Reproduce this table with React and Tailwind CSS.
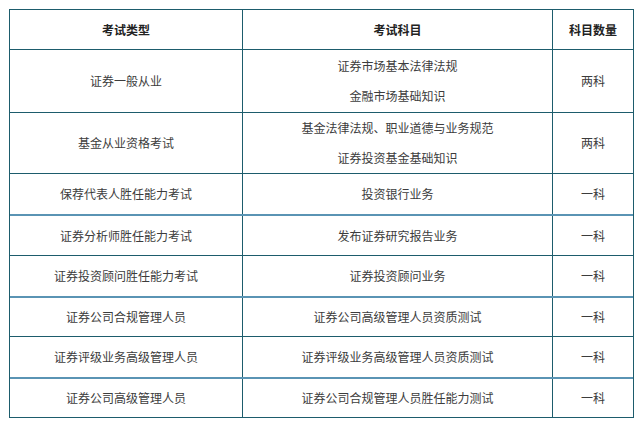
import React from "react";

const rows = [
  { type: "证券一般从业", subjects: ["证券市场基本法律法规", "金融市场基础知识"], count: "两科", h: "h-[63px]" },
  { type: "基金从业资格考试", subjects: ["基金法律法规、职业道德与业务规范", "证券投资基金基础知识"], count: "两科", h: "h-[61px]" },
  { type: "保荐代表人胜任能力考试", subjects: ["投资银行业务"], count: "一科", h: "h-[41px]" },
  { type: "证券分析师胜任能力考试", subjects: ["发布证券研究报告业务"], count: "一科", h: "h-[41px]", light: true },
  { type: "证券投资顾问胜任能力考试", subjects: ["证券投资顾问业务"], count: "一科", h: "h-[41px]" },
  { type: "证券公司合规管理人员", subjects: ["证券公司高级管理人员资质测试"], count: "一科", h: "h-[40px]", light: true },
  { type: "证券评级业务高级管理人员", subjects: ["证券评级业务高级管理人员资质测试"], count: "一科", h: "h-[41px]" },
  { type: "证券公司高级管理人员", subjects: ["证券公司合规管理人员胜任能力测试"], count: "一科", h: "h-[40px]", light: true },
];

const App = () => {
  return (
    <div
      className="bg-white w-[640px] h-[424px] pt-[9px] pl-[9px]"
      style={{ fontFamily: '"Noto Sans CJK SC", "Noto Sans", sans-serif' }}
    >
      <div className="w-[625px] border border-[#1d5c6c] text-[12px] text-[#3c3c3c]">
        {/* header */}
        <div className="flex h-[39px] font-bold text-[#222]">
          <div className="w-[233px] border-r border-[#1d5c6c] flex items-center justify-center">考试类型</div>
          <div className="w-[310px] border-r border-[#1d5c6c] flex items-center justify-center">考试科目</div>
          <div className="flex-1 flex items-center justify-center">科目数量</div>
        </div>

        {rows.map((r) => (
          <div
            key={r.type}
            className={`flex box-border ${r.h} ${
              r.light ? "border-t-2 border-[#5a94b4]" : "border-t border-[#1d5c6c]"
            }`}
          >
            <div className="w-[233px] border-r border-[#1d5c6c] flex items-center justify-center">{r.type}</div>
            <div className="w-[310px] border-r border-[#1d5c6c] flex flex-col items-center justify-center gap-[12px]">
              {r.subjects.map((s) => (
                <span key={s} className="leading-[18px]">{s}</span>
              ))}
            </div>
            <div className="flex-1 flex items-center justify-center">{r.count}</div>
          </div>
        ))}
      </div>
    </div>
  );
};

export default App;
